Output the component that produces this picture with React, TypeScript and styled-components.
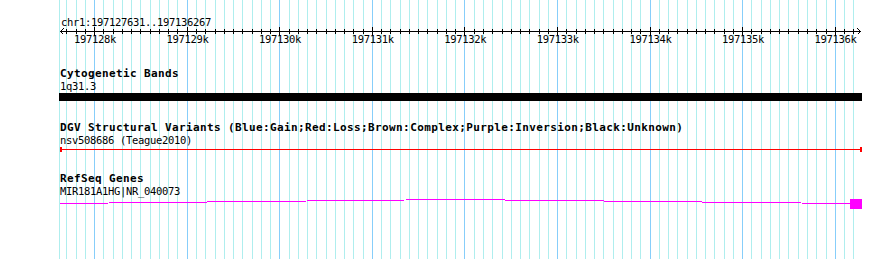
import React from "react";
import styled, { createGlobalStyle } from "styled-components";

const START = 197127631;
const END = 197136267;
const X0 = 60.5;
const SCALE = 799.5 / (END - START);
const xOf = (bp: number) => X0 + (bp - START) * SCALE;

const FONT = `"DejaVu Sans Mono", "Liberation Mono", monospace`;

const MINOR: number[] = [];
for (let bp = 197127700; bp <= 197136200; bp += 100) MINOR.push(bp);
const MAJOR = MINOR.filter((bp) => bp % 1000 === 0);

const GlobalStyle = createGlobalStyle`
  html, body { margin: 0; padding: 0; background: #ffffff; }
  #root { width: 890px; height: 259px; }
`;

const Panel = styled.div`
  position: relative;
  width: 890px;
  height: 259px;
  overflow: hidden;
  background: #ffffff;
  font-family: ${FONT};
  color: #000000;
`;

const GridLayer = styled.svg`
  position: absolute;
  left: 0;
  top: 0;
  z-index: 0;
  display: block;
`;

const Tracks = styled.div`
  position: relative;
  z-index: 1;
  display: flex;
  flex-direction: column;
  padding-top: 16px;
`;

const Track = styled.section<{ $mt: number }>`
  display: flex;
  flex-direction: column;
  margin-top: ${(p) => p.$mt}px;
`;

const Label = styled.div<{ $indent?: number }>`
  padding-left: ${(p) => p.$indent ?? 60}px;
  font-size: 10.5px;
  letter-spacing: -0.32px;
  line-height: 12px;
  height: 12px;
  white-space: nowrap;
`;

const Title = styled.div`
  padding-left: 60px;
  font-size: 11px;
  font-weight: bold;
  letter-spacing: 0.38px;
  line-height: 11px;
  height: 11px;
  margin-bottom: 1px;
  white-space: nowrap;
`;

const Glyph = styled.svg<{ $mt: number }>`
  display: block;
  flex: none;
  overflow: visible;
  margin-top: ${(p) => p.$mt}px;
  text {
    font-family: ${FONT};
    font-size: 10.5px;
    letter-spacing: -0.32px;
    fill: #000000;
  }
`;

const Grid: React.FC = () => (
  <GridLayer width={890} height={259} shapeRendering="crispEdges">
    <rect x={59} y={0} width={1} height={259} fill="#afeeee" />
    {MINOR.map((bp) => (
      <rect
        key={bp}
        x={Math.floor(xOf(bp))}
        y={0}
        width={1}
        height={259}
        fill={bp % 1000 === 0 ? "#87cefa" : "#afeeee"}
      />
    ))}
  </GridLayer>
);

// ruler svg top sits at page y = 28
const RY = 28;
const Ruler: React.FC = () => (
  <Glyph $mt={0} width={890} height={18} shapeRendering="crispEdges">
    <rect x={60} y={31 - RY} width={801} height={1} fill="#000" />
    <polyline
      points={`63.5,${28.5 - RY} 60.5,${31.5 - RY} 63.5,${34.5 - RY}`}
      fill="none"
      stroke="#000"
      strokeWidth={1}
    />
    <polyline
      points={`857.5,${28.5 - RY} 860.5,${31.5 - RY} 857.5,${34.5 - RY}`}
      fill="none"
      stroke="#000"
      strokeWidth={1}
    />
    {MINOR.map((bp) => {
      const major = bp % 1000 === 0;
      return (
        <rect
          key={bp}
          x={Math.floor(xOf(bp))}
          y={(major ? 27 : 29) - RY}
          width={1}
          height={major ? 9 : 5}
          fill="#000"
        />
      );
    })}
    {MAJOR.map((bp) => (
      <text key={bp} x={xOf(bp) + 0.3} y={43 - RY} textAnchor="middle" shapeRendering="auto">
        {`${bp / 1000}k`}
      </text>
    ))}
  </Glyph>
);

const BandBar: React.FC = () => (
  <Glyph $mt={1} width={890} height={8} shapeRendering="crispEdges">
    <rect x={59} y={0} width={803} height={8} fill="#000" />
  </Glyph>
);

const VariantSpan: React.FC = () => (
  <Glyph $mt={1} width={890} height={5} shapeRendering="crispEdges">
    <rect x={60} y={2} width={802} height={1} fill="#ff0000" />
    <rect x={60} y={0} width={2} height={5} fill="#ff0000" />
    <rect x={860} y={0} width={2} height={5} fill="#ff0000" />
  </Glyph>
);

const GeneModel: React.FC = () => (
  <Glyph $mt={2} width={890} height={10} shapeRendering="crispEdges">
    <polyline
      points="60,4.5 455,0.5 850,4.5"
      fill="none"
      stroke="#ff00ff"
      strokeWidth={1}
    />
    <rect x={850} y={0} width={12} height={10} fill="#ff00ff" />
  </Glyph>
);

export default function App() {
  return (
    <>
      <GlobalStyle />
      <Panel>
        <Grid />
        <Tracks>
          <Label $indent={61}>chr1:197127631..197136267</Label>
          <Ruler />
          <Track $mt={22}>
            <Title>Cytogenetic Bands</Title>
            <Label>1q31.3</Label>
            <BandBar />
          </Track>
          <Track $mt={21}>
            <Title>
              DGV Structural Variants (Blue:Gain;Red:Loss;Brown:Complex;Purple:Inversion;Black:Unknown)
            </Title>
            <Label>nsv508686 (Teague2010)</Label>
            <VariantSpan />
          </Track>
          <Track $mt={21}>
            <Title>RefSeq Genes</Title>
            <Label>MIR181A1HG|NR_040073</Label>
            <GeneModel />
          </Track>
        </Tracks>
      </Panel>
    </>
  );
}
